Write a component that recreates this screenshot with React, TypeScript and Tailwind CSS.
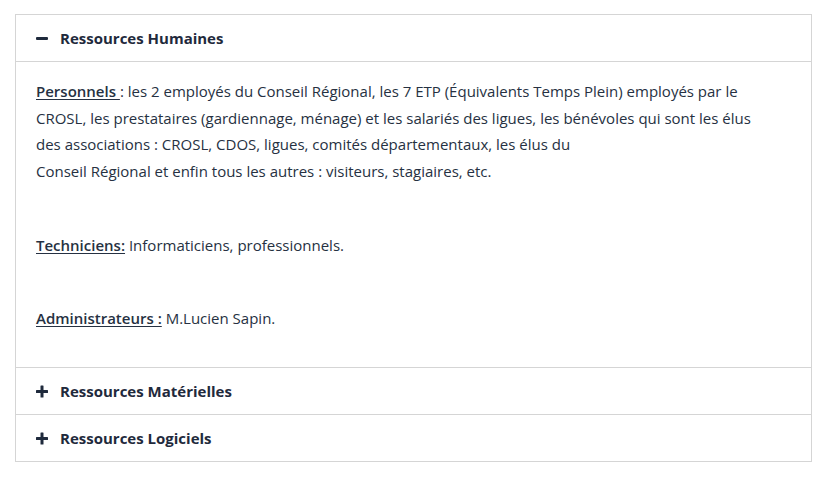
import React from 'react';

const Minus = () => (
  <svg width="12" height="13" viewBox="0 0 12 13" className="shrink-0">
    <rect x="0" y="5" width="12" height="3" rx="1" fill="#1f2a3c" />
  </svg>
);

const Plus = () => (
  <svg width="12" height="13" viewBox="0 0 12 13" className="shrink-0">
    <rect x="0" y="5" width="12" height="3" rx="0.5" fill="#1f2a3c" />
    <rect x="4.5" y="0.5" width="3" height="12" rx="0.5" fill="#1f2a3c" />
  </svg>
);

const Header = ({ title, open }: { title: string; open?: boolean }) => (
  <div className="flex items-center gap-[12px] h-[46px] pl-[20px] text-[15px] font-bold text-[#1f2a3c]">
    {open ? <Minus /> : <Plus />}
    <span>{title}</span>
  </div>
);

export default function App() {
  return (
    <div
      className="bg-white min-h-[480px] pt-[14px] px-[15px]"
      style={{ fontFamily: '"Open Sans", "Noto Sans", sans-serif' }}
    >
      <div className="w-[797px] border border-[#d5d5d5] text-[#263142]">
        <Header title="Ressources Humaines" open />
        <div className="border-t border-[#d5d5d5] pl-[20px] pr-[40px] pt-[16px] pb-[36px] text-[15px] leading-[26.5px]">
          <p>
            <span className="font-semibold underline underline-offset-2">Personnels </span>: les 2 employés du Conseil Régional, les 7 ETP (Équivalents Temps Plein) employés par le CROSL, les prestataires (gardiennage, ménage) et les salariés des ligues, les bénévoles qui sont les élus des associations : CROSL, CDOS, ligues, comités départementaux, les élus du
            <br />
            Conseil Régional et enfin tous les autres : visiteurs, stagiaires, etc.
          </p>
          <p className="mt-[48px]">
            <span className="font-semibold underline underline-offset-2">Techniciens:</span> Informaticiens, professionnels.
          </p>
          <p className="mt-[46px]">
            <span className="font-semibold underline underline-offset-2">Administrateurs :</span> M.Lucien Sapin.
          </p>
        </div>
        <div className="border-t border-[#d5d5d5]">
          <Header title="Ressources Matérielles" />
        </div>
        <div className="border-t border-[#d5d5d5]">
          <Header title="Ressources Logiciels" />
        </div>
      </div>
    </div>
  );
}
